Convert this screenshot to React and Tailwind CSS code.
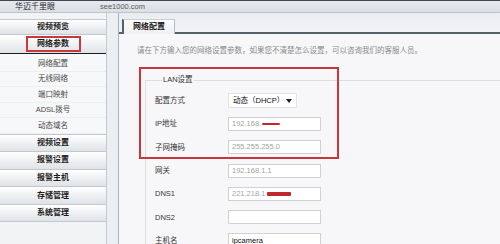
import React from 'react';

const subItems = ['网络配置', '无线网络', '端口映射', 'ADSL拨号', '动态域名'];
const mainItems = ['视频设置', '报警设置', '报警主机', '存储管理', '系统管理'];

const btn =
  'flex items-center justify-center bg-linear-to-b from-white to-[#dfe3e7] border-b border-[#c2c8ce] text-[8px] font-bold text-[#1d1d1d]';

const Row = ({ label, children }) => (
  <div className="flex items-center h-[23.3px]">
    <span className="w-[73px] text-[7.5px] text-[#333]">{label}</span>
    {children}
  </div>
);

const Field = ({ children, dark }) => (
  <div
    className={`w-[93px] h-[14px] bg-white border border-[#cfd2d5] flex items-center pl-[3px] text-[7.5px] leading-none ${
      dark ? 'text-[#111]' : 'text-[#a3a3a3]'
    }`}
  >
    {children}
  </div>
);

const App = () => {
  return (
    <div className="relative w-[500px] h-[244px] overflow-hidden bg-[#eef1f4] font-['Liberation_Sans','Noto_Sans_CJK_SC',sans-serif]">
      {/* Header */}
      <div className="h-[13px] border-t border-[#3d4852] border-b border-b-[#bcc5cd] bg-linear-to-b from-[#e6eaee] to-[#d9dfe4] flex items-center">
        <span className="ml-[15px] w-[85px] text-[8px] leading-none text-[#2a2a2a]">华迈千里眼</span>
        <span className="text-[7.5px] leading-none text-[#5a5a5a]">see1000.com</span>
      </div>

      <div className="flex h-[231px]">
        {/* Sidebar */}
        <div className="w-[107px] border-r border-[#c4cad0] bg-[#f1f3f5] pt-[6px]">
          <div className={`${btn} h-[16px] border-t`}>视频预览</div>
          <div className={`${btn} h-[19px] border-b-[1.5px] border-b-[#1e1e1e]`}>
            <span className="w-[55px] h-[16px] border-2 border-[#c6393c] flex items-center justify-center">网络参数</span>
          </div>
          <div className="pt-[2px] bg-[#f7f8f9]">
            {subItems.map((s) => (
              <div
                key={s}
                className="h-[15.5px] flex items-center justify-center text-[7.5px] text-[#4a4a4a] border-b border-[#eceef0]"
              >
                {s}
              </div>
            ))}
          </div>
          <div className="border-t border-[#c2c8ce]">
            {mainItems.map((s) => (
              <div key={s} className={`${btn} h-[17.6px]`}>
                {s}
              </div>
            ))}
          </div>
        </div>

        <div className="w-[11px] bg-[#eceff2]" />

        {/* Main */}
        <div className="flex-1 border-l border-[#a9b3bc] flex flex-col">
          <div className="h-[21px] shrink-0 flex items-end bg-linear-to-b from-[#eaedf0] to-[#f2f4f6]">
            <div className="w-[3px] h-[2px] bg-[#56616b]" />
            <div className="w-[53px] h-[15px] border-l-2 border-[#56616b] border-t border-t-[#c9cfd4] border-r border-r-[#b5bdc4] bg-linear-to-b from-[#fdfdfd] to-[#eef0f2] flex items-center justify-center text-[8px] font-bold text-[#1d1d1d]">
              网络配置
            </div>
            <div className="flex-1 h-[2px] bg-[#56616b]" />
          </div>

          <div className="flex-1 min-h-0 overflow-hidden bg-[#f7f7f9] pt-[12px]">
            <p className="pl-[18px] text-[7.5px] leading-[10px] text-[#8a8a8a] whitespace-nowrap">
              请在下方输入您的网络设置参数，如果您不清楚怎么设置，可以咨询我们的客服人员。
            </p>

            <fieldset className="ml-[26px] mt-[19px] border-l border-t border-[#dcdee0] pl-[9px] pt-[4px]">
              <legend className="ml-[7px] px-[1px] text-[7.5px] leading-[10px] text-[#333]">LAN设置</legend>
              <Row label="配置方式">
                <div className="w-[69px] h-[15px] bg-white border border-[#e2e4e6] flex items-center pl-[4px] text-[7.5px] leading-none text-[#111]">
                  <span className="flex-1">动态（DHCP）</span>
                  <svg width="6" height="4" viewBox="0 0 6 4" className="mr-[4px]">
                    <path d="M0 0h6L3 4z" fill="#222" />
                  </svg>
                </div>
              </Row>
              <Row label="IP地址">
                <Field>
                  192.168.
                  <span className="inline-block w-[18px] h-[2px] bg-[#c0282d] rounded-full ml-[1px]" />
                </Field>
              </Row>
              <Row label="子网掩码">
                <Field>255.255.255.0</Field>
              </Row>
              <Row label="网关">
                <Field>192.168.1.1</Field>
              </Row>
              <Row label="DNS1">
                <Field>
                  221.218.1
                  <span className="inline-block w-[24px] h-[4px] bg-[#c0282d] rounded-[1px] ml-[2px]" />
                </Field>
              </Row>
              <Row label="DNS2">
                <Field />
              </Row>
              <Row label="主机名">
                <Field dark>ipcamera</Field>
              </Row>
            </fieldset>
          </div>
        </div>
      </div>

      {/* highlight box drawn over the LAN settings */}
      <div className="absolute left-[139px] top-[67px] w-[200px] h-[92px] border-2 border-[#c9353b] pointer-events-none" />
    </div>
  );
};

export default App;
